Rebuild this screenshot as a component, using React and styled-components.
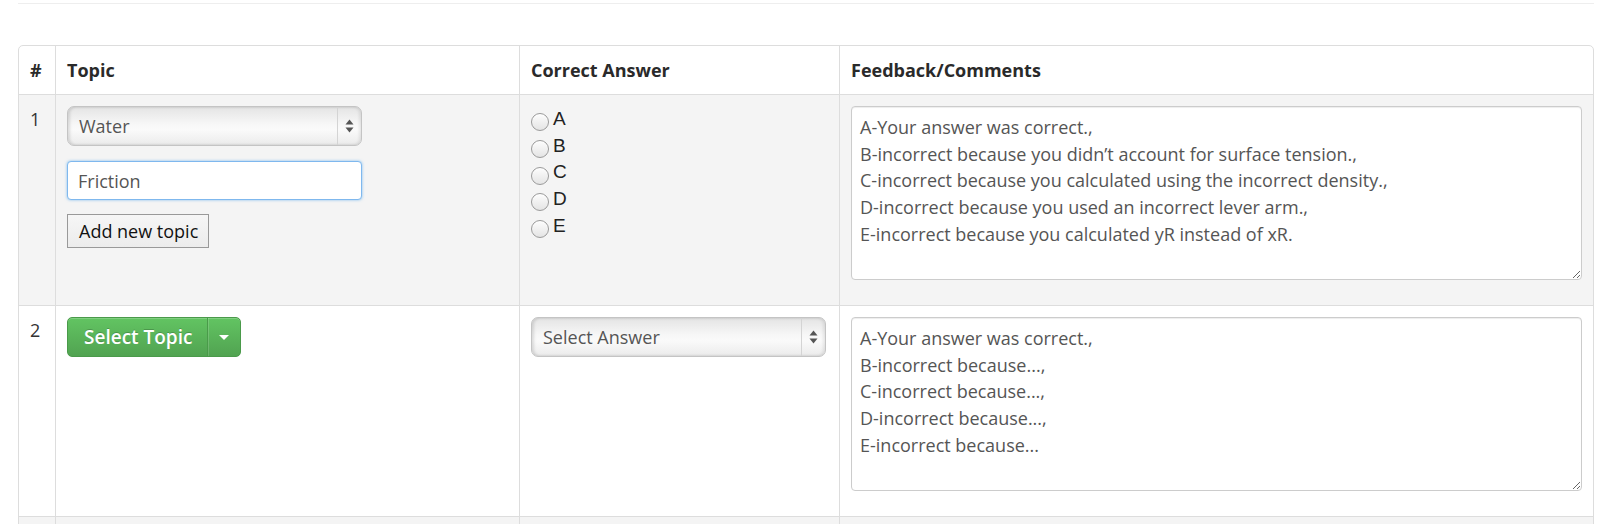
import { useState } from 'react';
import styled, { createGlobalStyle } from 'styled-components';

const GlobalStyle = createGlobalStyle`
  html, body {
    margin: 0;
    padding: 0;
    background: #fff;
  }
  body {
    font-family: "Open Sans", "Noto Sans", sans-serif;
    font-size: 18px;
    color: #333;
  }
`;

const Page = styled.div`
  padding: 3px 6px 0 18px;
`;

const Rule = styled.hr`
  margin: 0 0 41px;
  border: 0;
  border-top: 1px solid #eee;
`;

const Grid = styled.table`
  width: 100%;
  table-layout: fixed;
  border-collapse: separate;
  border-spacing: 0;
  border: 1px solid #ddd;
  border-radius: 5px;
`;

const HeadCell = styled.th`
  text-align: left;
  font-weight: 700;
  font-size: 18px;
  line-height: 24px;
  color: #2a2a2a;
  padding: 12px 11px 12px;
  border-left: ${(p) => (p.$first ? '0' : '1px solid #ddd')};
`;

const Row = styled.tr`
  background: ${(p) => (p.$striped ? '#f4f4f4' : '#fff')};
`;

const Cell = styled.td`
  vertical-align: top;
  height: ${(p) => (p.$height ? `${p.$height}px` : 'auto')};
  padding: 11px 11px 12px;
  border-top: 1px solid #ddd;
  border-left: ${(p) => (p.$first ? '0' : '1px solid #ddd')};
  line-height: 26.7px;
  color: #333;
`;

const Stack = styled.div`
  display: flex;
  flex-direction: column;
  align-items: flex-start;
`;

const SelectBox = styled.div`
  display: flex;
  align-items: stretch;
  width: ${(p) => p.$width}px;
  height: 40px;
  box-sizing: border-box;
  border: 1px solid #c4c4c4;
  border-radius: 7px;
  background: linear-gradient(#e4e4e4, #f7f7f7 45%, #fafafa 60%, #ebebeb);
  box-shadow: inset 2px 0 3px rgba(0, 0, 0, 0.12), inset -2px 0 3px rgba(0, 0, 0, 0.08);
  color: #555;
  font-size: 18px;
  overflow: hidden;
`;

const SelectLabel = styled.span`
  flex: 1;
  display: flex;
  align-items: center;
  padding-left: 11px;
`;

const SelectArrow = styled.span`
  width: 23px;
  display: flex;
  align-items: center;
  justify-content: center;
  border-left: 1px solid #d4d4d4;
  color: #555;
`;

const TextField = styled.input`
  margin-top: 15px;
  width: 295px;
  height: 39px;
  box-sizing: border-box;
  padding: 0 10px;
  font: inherit;
  font-size: 18px;
  color: #555;
  background: #fff;
  border: 1px solid #7fb8ee;
  border-radius: 4px;
  box-shadow: 0 0 3px rgba(82, 168, 236, 0.7);
  outline: none;
`;

const PlainButton = styled.button`
  margin-top: 14px;
  height: 34px;
  padding: 0 10px 0 11px;
  font: inherit;
  font-size: 18px;
  color: #111;
  background: linear-gradient(#f6f6f6, #ececec);
  border: 1px solid #999;
  border-radius: 0;
`;

const SplitButton = styled.div`
  display: inline-flex;
  height: 40px;
  border-radius: 5px;
  overflow: hidden;
  border: 1px solid #4a9a4a;
  box-sizing: border-box;
  background: linear-gradient(#62c462, #51a351);
  color: #fff;
  text-shadow: 0 -1px 0 rgba(0, 0, 0, 0.2);
  box-shadow: inset 0 1px 0 rgba(255, 255, 255, 0.2);
`;

const SplitMain = styled.span`
  display: flex;
  align-items: center;
  padding: 0 15px 0 16px;
  font-size: 19px;
  font-weight: 600;
`;

const SplitCaret = styled.span`
  width: 32px;
  display: flex;
  align-items: center;
  justify-content: center;
  border-left: 1px solid #4a9a4a;
  box-shadow: inset 1px 0 0 rgba(255, 255, 255, 0.15);
`;

const Caret = styled.span`
  width: 0;
  height: 0;
  border-left: 5px solid transparent;
  border-right: 5px solid transparent;
  border-top: 5px solid #fff;
`;

const RadioList = styled.div`
  display: flex;
  flex-direction: column;
`;

const RadioLine = styled.label`
  display: flex;
  align-items: center;
  height: 26.7px;
  font-family: "Liberation Sans", "Open Sans", sans-serif;
  font-size: 19px;
  color: #222;
`;

const Radio = styled.input`
  appearance: none;
  margin: 6px 4px 0 0;
  width: 18px;
  height: 18px;
  border-radius: 50%;
  border: 1px solid #9a9a9a;
  background: linear-gradient(#fdfdfd, #e4e4e4);
  box-shadow: inset 0 1px 1px rgba(255, 255, 255, 0.8);
`;

const Notes = styled.textarea`
  display: block;
  width: 100%;
  height: 174px;
  box-sizing: border-box;
  margin: 0 0 13px;
  padding: 7px 8px 4px;
  font: inherit;
  font-size: 18px;
  line-height: 26.7px;
  color: #555;
  background: #fff;
  border: 1px solid #ccc;
  border-radius: 4px;
  box-shadow: inset 0 1px 1px rgba(0, 0, 0, 0.075);
  resize: vertical;
`;

function UpDown() {
  return (
    <svg width="9" height="14" viewBox="0 0 9 14">
      <path d="M4.5 0.5 L8.5 5.5 L0.5 5.5 Z" fill="#555" />
      <path d="M4.5 13.5 L8.5 8.5 L0.5 8.5 Z" fill="#555" />
    </svg>
  );
}

function FakeSelect({ width, children }) {
  return (
    <SelectBox $width={width}>
      <SelectLabel>{children}</SelectLabel>
      <SelectArrow>
        <UpDown />
      </SelectArrow>
    </SelectBox>
  );
}

const fullNotes = [
  'A-Your answer was correct.,',
  'B-incorrect because you didn’t account for surface tension.,',
  'C-incorrect because you calculated using the incorrect density.,',
  'D-incorrect because you used an incorrect lever arm.,',
  'E-incorrect because you calculated yR instead of xR.',
].join('\n');

const shortNotes = [
  'A-Your answer was correct.,',
  'B-incorrect because...,',
  'C-incorrect because...,',
  'D-incorrect because...,',
  'E-incorrect because...',
].join('\n');

export default function App() {
  const [newTopic, setNewTopic] = useState('Friction');
  const [answer, setAnswer] = useState('');

  return (
    <Page>
      <GlobalStyle />
      <Rule />
      <Grid>
        <colgroup>
          <col style={{ width: 36 }} />
          <col style={{ width: 464 }} />
          <col style={{ width: 320 }} />
          <col />
        </colgroup>
        <thead>
          <tr>
            <HeadCell $first>#</HeadCell>
            <HeadCell>Topic</HeadCell>
            <HeadCell>Correct Answer</HeadCell>
            <HeadCell>Feedback/Comments</HeadCell>
          </tr>
        </thead>
        <tbody>
          <Row $striped>
            <Cell $first>1</Cell>
            <Cell>
              <Stack>
                <FakeSelect width={295}>Water</FakeSelect>
                <TextField value={newTopic} onChange={(e) => setNewTopic(e.target.value)} />
                <PlainButton type="button">Add new topic</PlainButton>
              </Stack>
            </Cell>
            <Cell>
              <RadioList>
                {['A', 'B', 'C', 'D', 'E'].map((letter) => (
                  <RadioLine key={letter}>
                    <Radio
                      type="radio"
                      name="answer-1"
                      checked={answer === letter}
                      onChange={() => setAnswer(letter)}
                    />
                    {letter}
                  </RadioLine>
                ))}
              </RadioList>
            </Cell>
            <Cell>
              <Notes defaultValue={fullNotes} />
            </Cell>
          </Row>
          <Row>
            <Cell $first>2</Cell>
            <Cell>
              <SplitButton>
                <SplitMain>Select Topic</SplitMain>
                <SplitCaret>
                  <Caret />
                </SplitCaret>
              </SplitButton>
            </Cell>
            <Cell>
              <FakeSelect width={295}>Select Answer</FakeSelect>
            </Cell>
            <Cell>
              <Notes defaultValue={shortNotes} />
            </Cell>
          </Row>
          <Row $striped>
            <Cell $first $height={40} />
            <Cell />
            <Cell />
            <Cell />
          </Row>
        </tbody>
      </Grid>
    </Page>
  );
}
